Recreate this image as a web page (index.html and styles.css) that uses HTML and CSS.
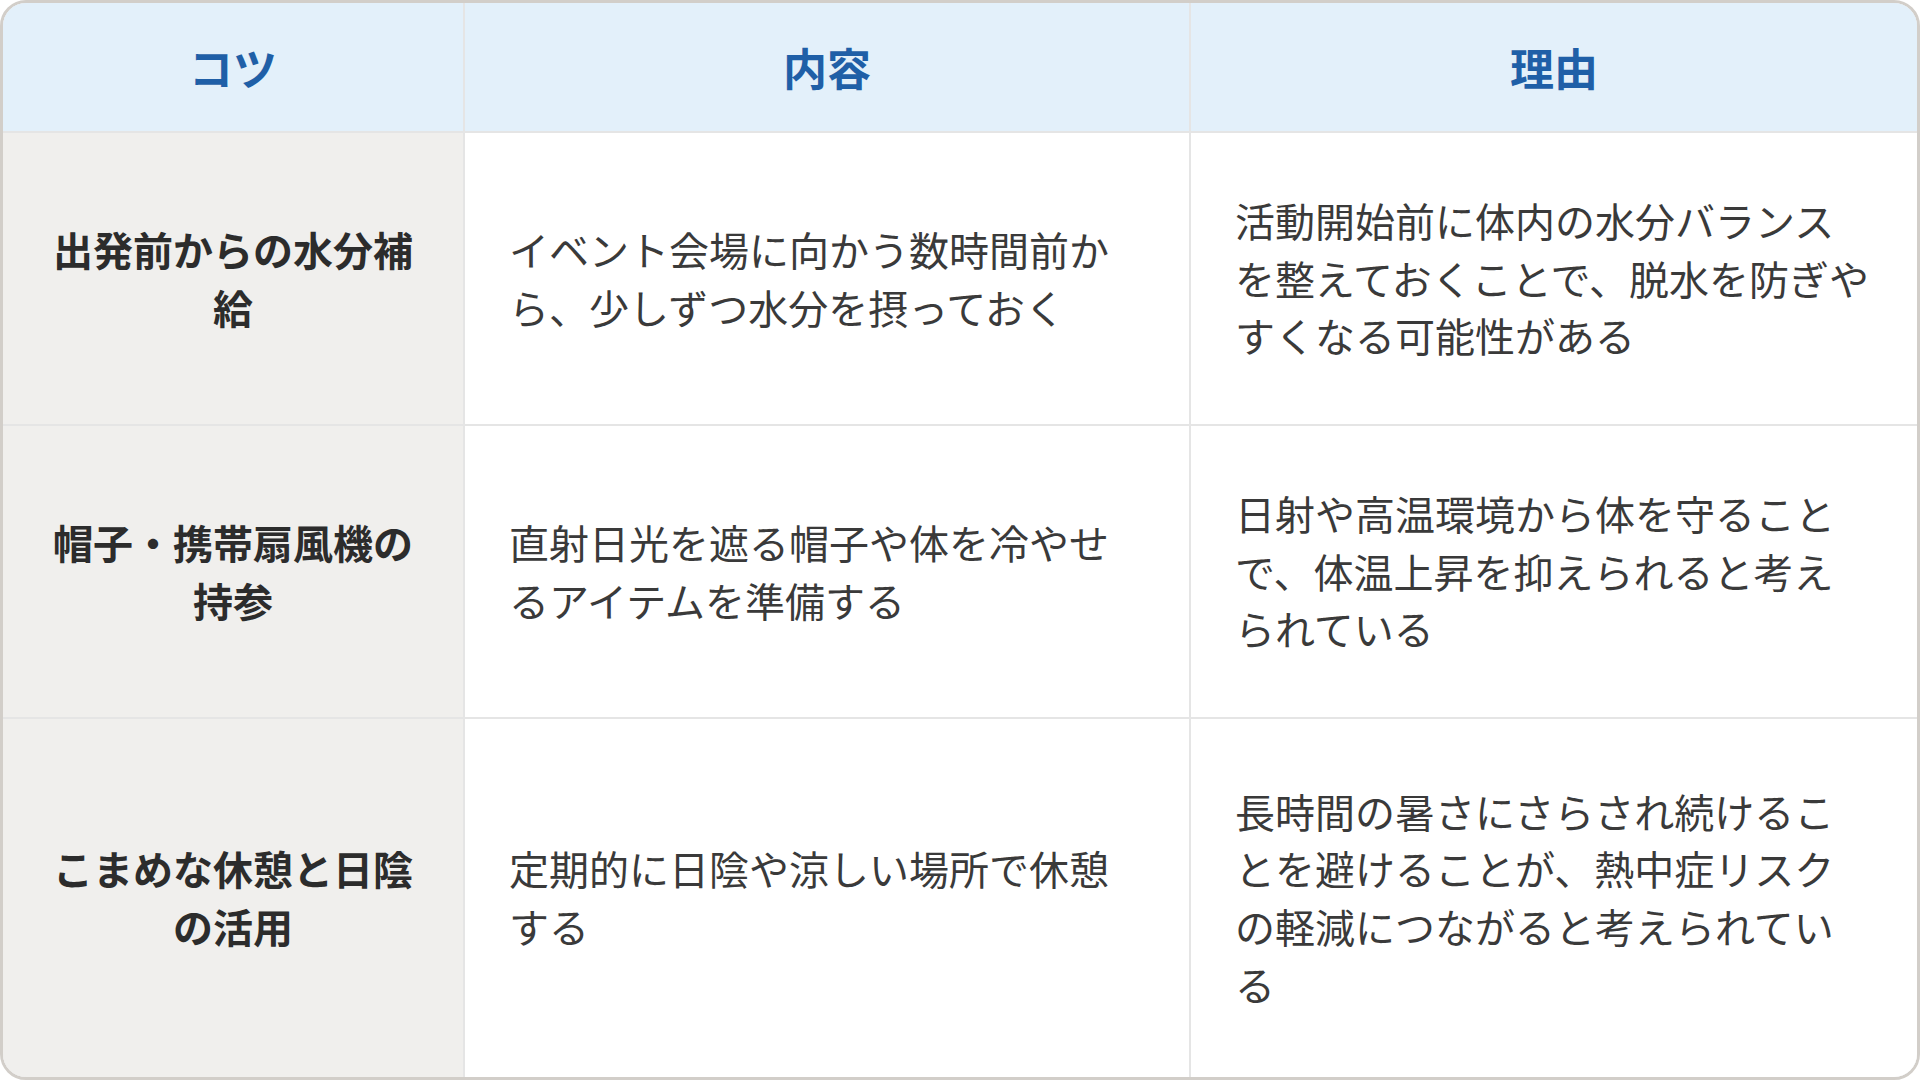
FILE: index.html
```html
<!DOCTYPE html>
<html lang="ja">
<head>
<meta charset="utf-8">
<link rel="stylesheet" href="styles.css">
</head>
<body>
<div class="card">
  <div class="grid">
    <div class="cell head">コツ</div>
    <div class="cell head">内容</div>
    <div class="cell head">理由</div>

    <div class="cell tip">出発前からの水分補給</div>
    <div class="cell body">イベント会場に向かう数時間前から、少しずつ水分を摂っておく</div>
    <div class="cell body">活動開始前に体内の水分バランスを整えておくことで、脱水を防ぎやすくなる可能性がある</div>

    <div class="cell tip">帽子・携帯扇風機の持参</div>
    <div class="cell body">直射日光を遮る帽子や体を冷やせるアイテムを準備する</div>
    <div class="cell body">日射や高温環境から体を守ることで、体温上昇を抑えられると考えられている</div>

    <div class="cell tip">こまめな休憩と日陰の活用</div>
    <div class="cell body">定期的に日陰や涼しい場所で休憩する</div>
    <div class="cell body">長時間の暑さにさらされ続けることを避けることが、熱中症リスクの軽減につながると考えられている</div>
  </div>
</div>
</body>
</html>
```
FILE: styles.css
```css
html, body {
  margin: 0;
  padding: 0;
  background: #ffffff;
}
body {
  width: 1920px;
  height: 1080px;
  font-family: "Noto Sans CJK JP", "Noto Sans", sans-serif;
}
.card {
  box-sizing: border-box;
  width: 1920px;
  height: 1080px;
  border: 3px solid #d2cec9;
  border-radius: 26px;
  overflow: hidden;
  background: #e5e5e5;
}
.grid {
  display: grid;
  grid-template-columns: 460px 724px 1fr;
  grid-template-rows: 128px 291px 291px 1fr;
  gap: 2px;
  height: 100%;
  background: #e5e5e5;
}
.cell {
  display: flex;
  align-items: center;
  box-sizing: border-box;
  padding: 0 44px;
  font-size: 40px;
  line-height: 57.6px;
}
.head {
  background: #e3f0fa;
  color: #1f5fa7;
  font-weight: 700;
  font-size: 44px;
  padding-top: 2px;
  justify-content: center;
  text-align: center;
}
.tip {
  background: #f0efed;
  color: #2c2c2c;
  font-weight: 700;
  justify-content: center;
  text-align: center;
}
.body {
  background: #ffffff;
  color: #3a3a3a;
  font-weight: 400;
}
```
